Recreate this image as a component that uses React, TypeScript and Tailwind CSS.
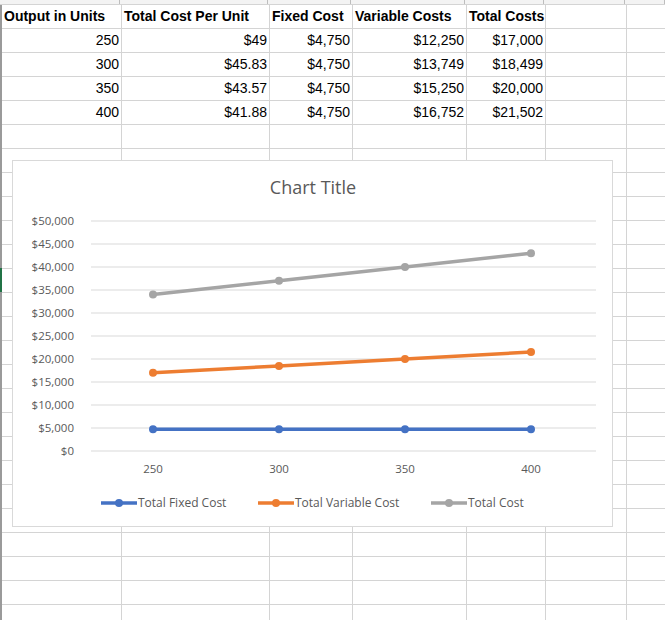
export default function App() {
  const cols = [120, 148, 83, 114, 79, 81, 40];
  const data = [
    ["Output in Units", "Total Cost Per Unit", "Fixed Cost", "Variable Costs", "Total Costs"],
    ["250", "$49", "$4,750", "$12,250", "$17,000"],
    ["300", "$45.83", "$4,750", "$13,749", "$18,499"],
    ["350", "$43.57", "$4,750", "$15,250", "$20,000"],
    ["400", "$41.88", "$4,750", "$16,752", "$21,502"],
  ];
  const rows = Array.from({ length: 26 });
  const xs = [152, 278, 404, 530];
  const yv = (v: number) => 450 - (v / 5000) * 23;
  const series = [
    { c: "#4472c4", v: [4750, 4750, 4750, 4750], n: "Total Fixed Cost" },
    { c: "#ed7d31", v: [17000, 18499, 20000, 21502], n: "Total Variable Cost" },
    { c: "#a5a5a5", v: [34000, 37000, 40000, 43000], n: "Total Cost" },
  ];
  const cx = (x: number) => x - 12;
  const cy = (y: number) => y - 160;
  return (
    <div className="relative w-[665px] h-[620px] overflow-hidden bg-white" style={{ fontFamily: "'Liberation Sans', Arial, sans-serif" }}>
      <div className="h-[5px] flex border-b border-[#d4d4d4] bg-[#f3f3f3]">
        <div className="w-[2px]" />
        {cols.map((w, i) => (
          <div key={i} style={{ width: w }} className="border-r border-[#bdbdbd] shrink-0" />
        ))}
      </div>
      <div className="absolute left-0 top-[268px] w-[2px] h-[24px] bg-[#217346]" />
      <div className="flex flex-col border-l-2 border-[#9a9a9a] ml-0">
        {rows.map((_, r) => (
          <div key={r} className="flex h-[24px] shrink-0">
            {cols.map((w, c) => {
              const t = data[r]?.[c] ?? "";
              const header = r === 0;
              const left = c === 0 && !header ? false : false;
              return (
                <div
                  key={c}
                  style={{ width: w }}
                  className={`shrink-0 border-r border-b border-[#d4d4d4] text-[14px] leading-[23px] whitespace-nowrap overflow-visible px-[2px] text-black ${header ? "font-bold text-left" : "text-right"} ${left ? "" : ""}`}
                >
                  {t}
                </div>
              );
            })}
          </div>
        ))}
      </div>
      <div className="absolute left-[12px] top-[160px] w-[601px] h-[367px] bg-white border border-[#d9d9d9]">
        <svg width="601" height="367" style={{ fontFamily: "'Open Sans', 'Noto Sans', sans-serif" }}>
          <text x={cx(312)} y={cy(193)} textAnchor="middle" fontSize="18" fill="#595959">Chart Title</text>
          {Array.from({ length: 11 }).map((_, i) => {
            const y = cy(450 - i * 23);
            return (
              <g key={i}>
                <line x1={cx(90)} x2={cx(595)} y1={y} y2={y} stroke="#d9d9d9" strokeWidth="1" />
                <text x={cx(73)} y={y + 4} textAnchor="end" fontSize="11.5" fill="#595959">
                  {"$" + (i * 5000).toLocaleString("en-US")}
                </text>
              </g>
            );
          })}
          {xs.map((x, i) => (
            <text key={i} x={cx(x)} y={cy(472)} textAnchor="middle" fontSize="11.5" fill="#595959">{["250", "300", "350", "400"][i]}</text>
          ))}
          {series.map((s) => (
            <g key={s.n}>
              <polyline fill="none" stroke={s.c} strokeWidth="3.5" strokeLinecap="round" points={s.v.map((v, i) => `${cx(xs[i])},${cy(yv(v))}`).join(" ")} />
              {s.v.map((v, i) => (
                <circle key={i} cx={cx(xs[i])} cy={cy(yv(v))} r="4" fill={s.c} />
              ))}
            </g>
          ))}
          {[{ x: 100 }, { x: 257 }, { x: 430 }].map((l, i) => (
            <g key={i}>
              <line x1={cx(l.x)} x2={cx(l.x + 36)} y1={cy(502)} y2={cy(502)} stroke={series[i].c} strokeWidth="3.5" />
              <circle cx={cx(l.x + 18)} cy={cy(502)} r="4" fill={series[i].c} />
              <text x={cx(l.x + 37)} y={cy(506)} fontSize="12" fill="#595959">{series[i].n}</text>
            </g>
          ))}
        </svg>
      </div>
    </div>
  );
}
